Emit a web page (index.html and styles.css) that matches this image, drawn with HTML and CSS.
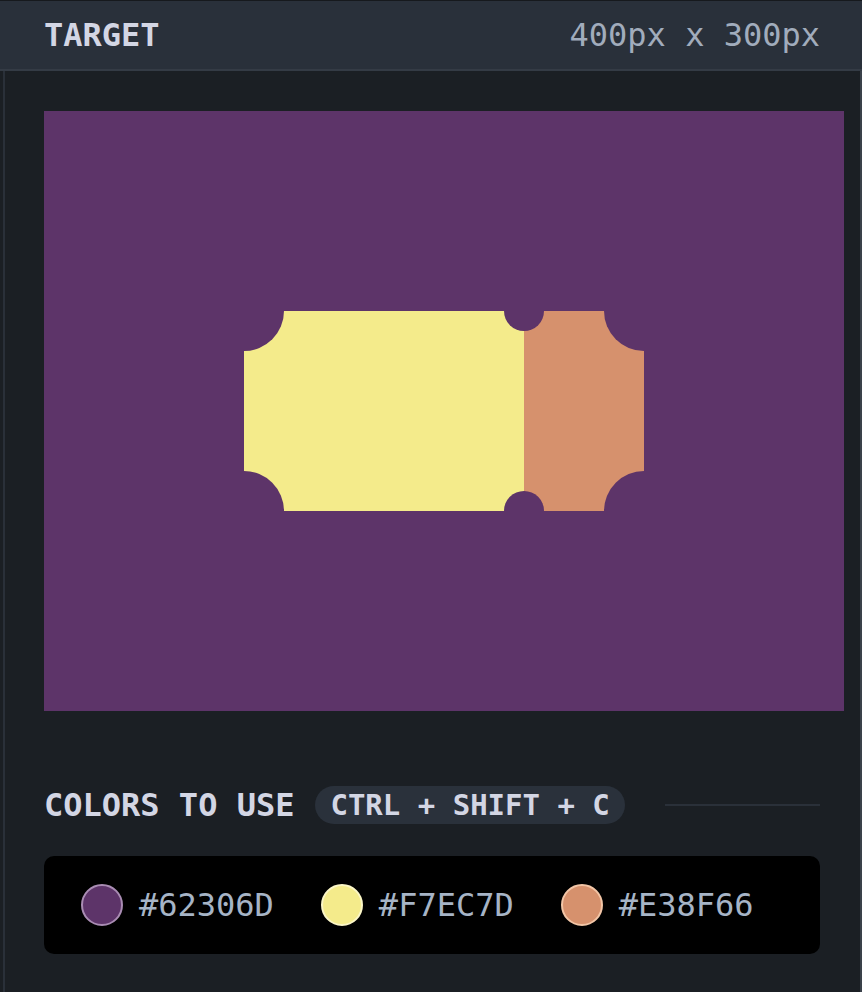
FILE: index.html
```html
<!DOCTYPE html>
<html>
<head>
<meta charset="utf-8">
<link rel="stylesheet" href="styles.css">
</head>
<body>
<div class="panel">
  <header class="header">
    <span class="title">TARGET</span>
    <span class="size">400px x 300px</span>
  </header>
  <main class="content">
    <div class="target">
      <div class="ticket">
        <div class="stub-main"></div>
        <div class="stub-side"></div>
        <span class="cut cut-tl"></span>
        <span class="cut cut-tr"></span>
        <span class="cut cut-bl"></span>
        <span class="cut cut-br"></span>
        <span class="notch notch-t"></span>
        <span class="notch notch-b"></span>
      </div>
    </div>
    <div class="colors-row">
      <span class="title">COLORS TO USE</span>
      <span class="pill">CTRL + SHIFT + C</span>
      <span class="rule"></span>
    </div>
    <div class="palette">
      <div class="swatch"><span class="dot dot-purple"></span><span class="hex">#62306D</span></div>
      <div class="swatch"><span class="dot dot-yellow"></span><span class="hex">#F7EC7D</span></div>
      <div class="swatch"><span class="dot dot-orange"></span><span class="hex">#E38F66</span></div>
    </div>
  </main>
</div>
</body>
</html>
```
FILE: styles.css
```css
html, body {
  margin: 0;
  padding: 0;
  background: #1b1f24;
}
.panel {
  width: 862px;
  height: 992px;
  overflow: hidden;
  font-family: "DejaVu Sans Mono", "Liberation Mono", monospace;
}
.header {
  box-sizing: border-box;
  height: 71px;
  border-top: 1px solid #16191d;
  border-bottom: 2px solid #343b45;
  background: #29303a;
  display: flex;
  align-items: center;
  justify-content: space-between;
  padding: 0 42px 0 44px;
}
.title {
  font-size: 32px;
  font-weight: bold;
  color: #d3d6e4;
}
.size {
  font-size: 32px;
  color: #a1acbc;
}
.content {
  box-sizing: border-box;
  margin-left: 3px;
  height: 921px;
  border-left: 2px solid #2a3039;
  border-right: 2px solid #3a414a;
  padding: 40px 40px 0 39px;
}
.target {
  width: 800px;
  height: 600px;
  background: #5d3469;
  display: flex;
  align-items: center;
  justify-content: center;
}
.ticket {
  position: relative;
  display: flex;
  width: 400px;
  height: 200px;
  overflow: hidden;
}
.stub-main {
  width: 280px;
  background: #f4eb8b;
}
.stub-side {
  width: 120px;
  background: #d6916d;
}
.cut, .notch {
  position: absolute;
  border-radius: 50%;
  background: #5d3469;
}
.cut { width: 80px; height: 80px; }
.cut-tl { left: -40px; top: -40px; }
.cut-tr { right: -40px; top: -40px; }
.cut-bl { left: -40px; bottom: -40px; }
.cut-br { right: -40px; bottom: -40px; }
.notch { width: 40px; height: 40px; left: 260px; }
.notch-t { top: -20px; }
.notch-b { bottom: -20px; }
.colors-row {
  display: flex;
  align-items: center;
  margin-top: 75px;
  height: 38px;
}
.pill {
  margin-left: 21px;
  height: 38px;
  box-sizing: border-box;
  padding: 0 15px;
  border-radius: 19px;
  background: #2a313b;
  color: #d3d6e4;
  font-size: 29px;
  font-weight: bold;
  display: flex;
  align-items: center;
}
.rule {
  flex: 1;
  height: 2px;
  margin-left: 40px;
  background: #2a3039;
}
.palette {
  margin-top: 32px;
  height: 98px;
  box-sizing: border-box;
  background: #000;
  border-radius: 10px;
  display: flex;
  align-items: center;
  padding-left: 37px;
  gap: 47px;
}
.swatch {
  display: flex;
  align-items: center;
  gap: 16px;
}
.dot {
  width: 42px;
  height: 42px;
  box-sizing: border-box;
  border-radius: 50%;
  border: 2px solid;
}
.dot-purple { background: #5d3469; border-color: #a98cb3; }
.dot-yellow { background: #f4eb8b; border-color: #fbf6c6; }
.dot-orange { background: #d6916d; border-color: #f2c5a6; }
.hex {
  font-size: 32px;
  color: #a6b4c6;
}
```
